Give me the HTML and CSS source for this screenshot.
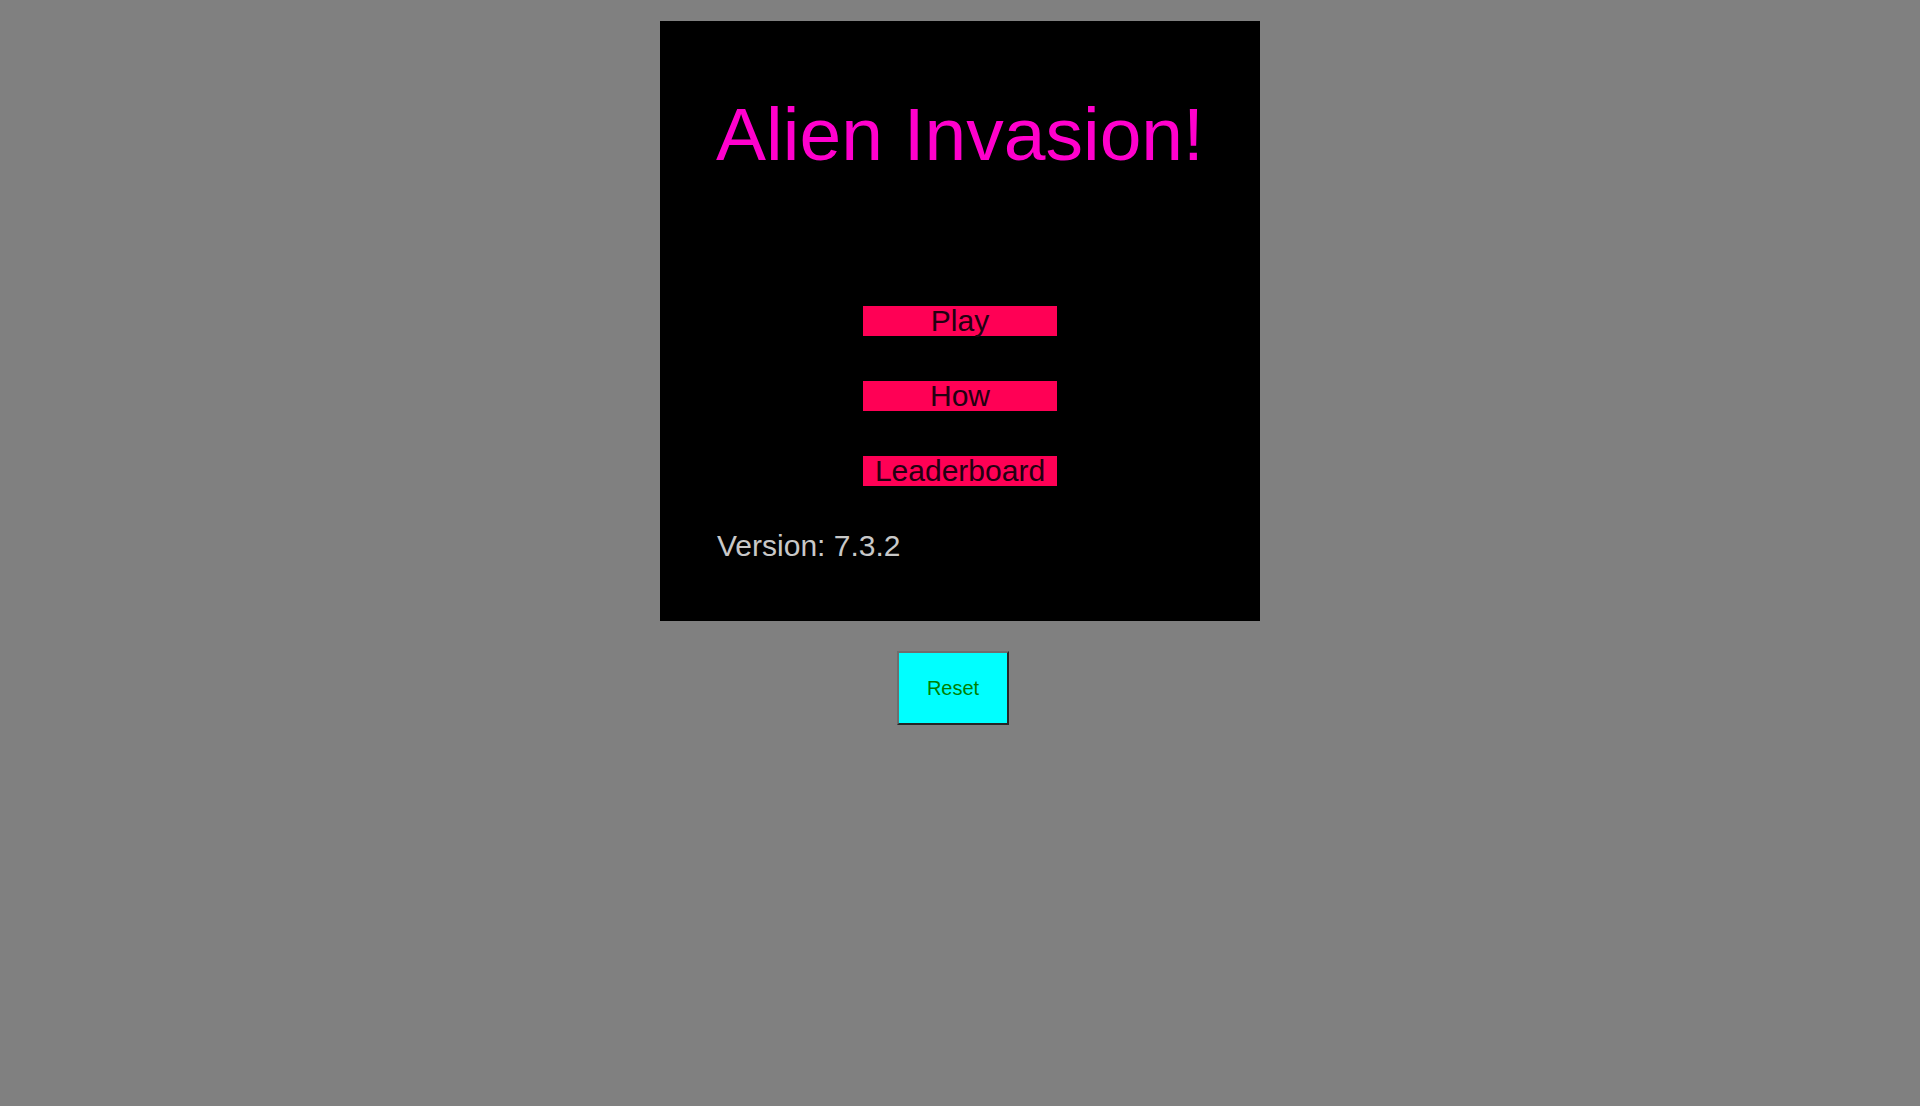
FILE: index.html
```html
<!DOCTYPE html>
<html lang="en">
<head>
<meta charset="utf-8">
<title>Alien Invasion!</title>
<link rel="stylesheet" href="styles.css">
</head>
<body>
<main class="page">
  <section class="screen">
    <h1 class="title">Alien Invasion!</h1>
    <nav class="menu">
      <div class="menu-item">Play</div>
      <div class="menu-item">How</div>
      <div class="menu-item">Leaderboard</div>
    </nav>
    <p class="version">Version: 7.3.2</p>
  </section>
  <div class="controls">
    <button class="reset" type="button">Reset</button>
  </div>
</main>
</body>
</html>
```

FILE: styles.css
```css
html, body {
  margin: 0;
  padding: 0;
}

body {
  background: #808080;
  font-family: "Liberation Sans", Arial, sans-serif;
  padding: 8px;
  min-height: 1090px;
  box-sizing: border-box;
}

.page {
  display: flex;
  flex-direction: column;
  align-items: center;
  padding-top: 13px;
}

.screen {
  width: 600px;
  height: 600px;
  box-sizing: border-box;
  background: #000;
  padding-top: 76px;
  display: flex;
  flex-direction: column;
}

.title {
  margin: 0;
  font-size: 75px;
  line-height: 75px;
  font-weight: normal;
  color: #ff00cc;
  text-align: center;
}

.menu {
  margin-top: 134px;
  display: flex;
  flex-direction: column;
  align-items: center;
  gap: 45px;
}

.menu-item {
  width: 194px;
  height: 30px;
  background: #ff0055;
  color: #220011;
  font-size: 30px;
  line-height: 30px;
  text-align: center;
  white-space: nowrap;
}

.version {
  margin: 45px 0 0 57px;
  font-size: 30px;
  line-height: 30px;
  color: #c8c8c8;
}

.controls {
  margin-top: 30px;
  display: flex;
  justify-content: center;
  width: 100%;
}

.reset {
  width: 112px;
  height: 74px;
  margin-right: 14px;
  box-sizing: border-box;
  background: #00ffff;
  color: #008000;
  font-family: "Liberation Sans", Arial, sans-serif;
  font-size: 20px;
  padding: 0;
  border-width: 2px;
  border-style: solid;
  border-color: #6e6e6e #262626 #262626 #6e6e6e;
  cursor: pointer;
}
```
